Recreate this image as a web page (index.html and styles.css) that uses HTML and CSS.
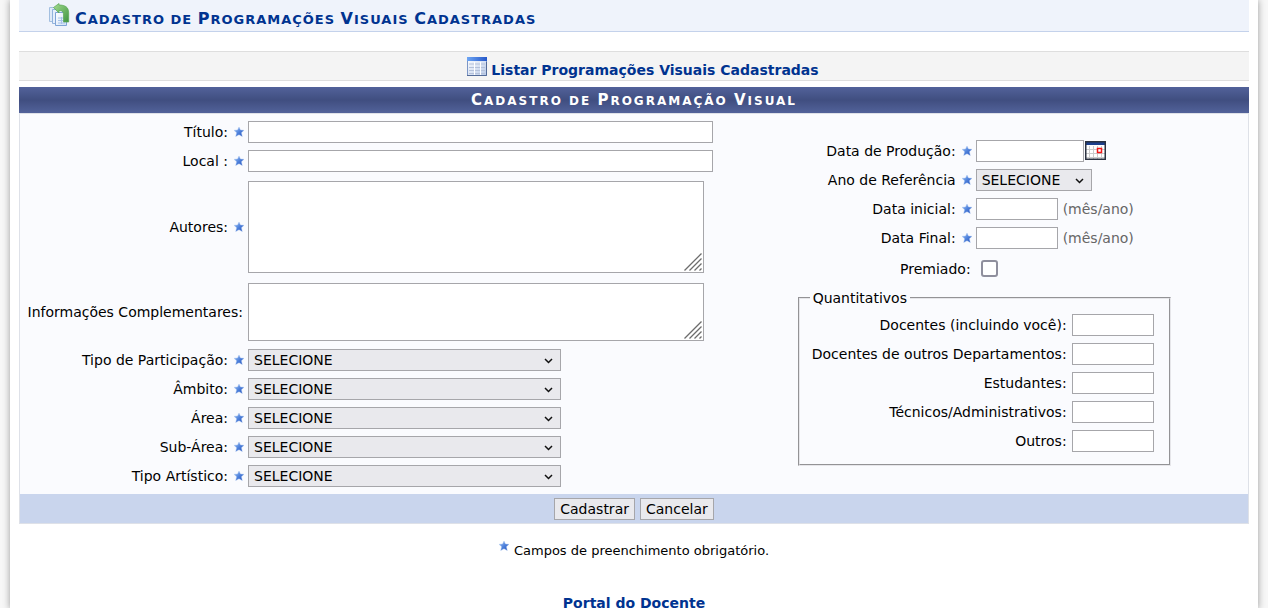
FILE: index.html
```html
<!DOCTYPE html>
<html lang="pt-BR">
<head>
<meta charset="utf-8">
<title>Cadastro de Programações Visuais Cadastradas</title>
<link rel="stylesheet" href="styles.css">
</head>
<body>
<svg class="sprites" aria-hidden="true">
  <defs>
    <linearGradient id="star-fill" x1="0" y1="0" x2="1" y2="1">
      <stop offset="0" stop-color="#a9cbf8"/><stop offset=".5" stop-color="#4f82dc"/><stop offset="1" stop-color="#2450b8"/>
    </linearGradient>
    <linearGradient id="sheet-fill" x1="0" y1="0" x2="1" y2="1">
      <stop offset="0" stop-color="#ffffff"/><stop offset="1" stop-color="#cfe0f6"/>
    </linearGradient>
    <linearGradient id="arrow-fill" x1="0" y1="0" x2="1" y2="1">
      <stop offset="0" stop-color="#a4dc90"/><stop offset="1" stop-color="#3f9440"/>
    </linearGradient>
    <linearGradient id="bar-fill" x1="0" y1="0" x2="1" y2="0">
      <stop offset="0" stop-color="#6ea6f4"/><stop offset="1" stop-color="#2557c8"/>
    </linearGradient>
    <linearGradient id="grid-fill" x1="0" y1="0" x2="1" y2="1">
      <stop offset="0" stop-color="#ffffff"/><stop offset="1" stop-color="#b7c9e8"/>
    </linearGradient>
  </defs>
  <symbol id="star" viewBox="0 0 10 10">
    <path d="M5 0 6.500 3 10 3.300 7.400 5.700 8.300 9.600 5 7.700 1.700 9.600 2.600 5.700 0 3.300 3.500 3Z" fill="url(#star-fill)" stroke="#a9c4f0" stroke-width=".4"/>
  </symbol>
  <symbol id="chevron" viewBox="0 0 9 6">
    <path d="M1 1 4.500 4.500 8 1" fill="none" stroke="#111" stroke-width="1.500"/>
  </symbol>
  <symbol id="grip" viewBox="0 0 18 18">
    <path d="M.5 17.500 17.500.5M5.500 17.500 17.500 5.500M10.500 17.500 17.500 10.500M15.500 17.500 17.500 15.500" fill="none" stroke="#6c6c6c" stroke-width="1.300"/>
  </symbol>
</svg>

<main class="page">
  <h1 class="page-title">
    <svg class="page-icon" viewBox="0 0 22 24" aria-hidden="true">
      <path d="M1.500 4.500h9v14h-9z" fill="#dfeaf8" stroke="#a3bfe0"/>
      <path d="M4.500 6.500h10v14h-10z" fill="#e6effb" stroke="#92b3dc"/>
      <path d="M7.500 9.500h11v13h-11z" fill="url(#sheet-fill)" stroke="#7fa4d6"/>
      <path d="M10 15h7M10 17.500h7M10 20h7M13.500 14v7" stroke="#a6c2e8" fill="none"/>
      <path d="M5.500 4.500 11 .5V2c6 0 9.700 2 9.700 8v9h-5.200v-7C15.500 8.500 14 7.500 11 7.500v2.500Z" fill="url(#arrow-fill)" stroke="#5aa653" stroke-width=".7"/>
    </svg>
    <span class="caps"><span class="word">Cadastro</span> de <span class="word">Programações</span> <span class="word">Visuais</span> <span class="word">Cadastradas</span></span>
  </h1>

  <nav class="toolbar">
    <svg class="list-icon" viewBox="0 0 20 19" aria-hidden="true">
      <rect x=".5" y=".5" width="19" height="18" fill="url(#grid-fill)" stroke="#7c96c6"/>
      <rect width="20" height="4" fill="url(#bar-fill)"/>
      <path d="M2 7h16M2 10.500h16M2 13.500h16M2 16.500h16" stroke="#b4c1da" fill="none"/>
      <path d="M7.500 5v13M13.500 5v13" stroke="#fff" fill="none"/>
      <path d="M0 18.500h19.500V5" stroke="#536b98" fill="none"/>
    </svg>
    <a href="#">Listar Programações Visuais Cadastradas</a>
  </nav>

  <form class="form">
    <h2 class="form-title"><span class="word">Cadastro</span> de <span class="word">Programação</span> <span class="word">Visual</span></h2>
    <div class="form-body">
      <div class="main-fields">
        <label for="titulo">Título:<svg class="star"><use href="#star"/></svg></label>
        <input class="text-wide" id="titulo" type="text">
        <label for="local">Local :<svg class="star"><use href="#star"/></svg></label>
        <input class="text-wide" id="local" type="text">
        <label for="autores">Autores:<svg class="star"><use href="#star"/></svg></label>
        <span class="area"><textarea class="area-tall" id="autores"></textarea><svg class="grip"><use href="#grip"/></svg></span>
        <label class="plain" for="info">Informações Complementares:</label>
        <span class="area"><textarea class="area-short" id="info"></textarea><svg class="grip"><use href="#grip"/></svg></span>
        <label for="tipo">Tipo de Participação:<svg class="star"><use href="#star"/></svg></label>
        <span class="select select-wide"><select id="tipo"><option>SELECIONE</option></select><svg class="chevron"><use href="#chevron"/></svg></span>
        <label for="ambito">Âmbito:<svg class="star"><use href="#star"/></svg></label>
        <span class="select select-wide"><select id="ambito"><option>SELECIONE</option></select><svg class="chevron"><use href="#chevron"/></svg></span>
        <label for="area">Área:<svg class="star"><use href="#star"/></svg></label>
        <span class="select select-wide"><select id="area"><option>SELECIONE</option></select><svg class="chevron"><use href="#chevron"/></svg></span>
        <label for="subarea">Sub-Área:<svg class="star"><use href="#star"/></svg></label>
        <span class="select select-wide"><select id="subarea"><option>SELECIONE</option></select><svg class="chevron"><use href="#chevron"/></svg></span>
        <label for="artistico">Tipo Artístico:<svg class="star"><use href="#star"/></svg></label>
        <span class="select select-wide"><select id="artistico"><option>SELECIONE</option></select><svg class="chevron"><use href="#chevron"/></svg></span>
      </div>

      <div class="side">
        <div class="side-fields">
          <label for="producao">Data de Produção:<svg class="star"><use href="#star"/></svg></label>
          <span class="field">
            <input class="text-date" id="producao" type="text">
            <button class="calendar" type="button" aria-label="Calendário">
              <svg viewBox="0 0 21 19" width="21" height="19" aria-hidden="true">
                <rect x="1" y="1" width="19" height="17" fill="#fff"/>
                <path d="M1 8.500h19M1 12.500h19M1 16.500h19M4.500 5v13M8.500 5v13M12.500 5v13M16.500 5v13" stroke="#cccccc" fill="none"/>
                <path d="M1 2.500h19" stroke="#1c3f8c" stroke-width="3"/>
                <rect x=".75" y=".75" width="19.500" height="17.500" fill="none" stroke="#2b3240" stroke-width="1.500"/>
                <path d="M12.500 7.500h4v4h-4z" fill="#fff" stroke="#f01818" stroke-width="1.500"/>
              </svg>
            </button>
          </span>
          <label for="ano">Ano de Referência<svg class="star"><use href="#star"/></svg></label>
          <span class="select select-year"><select id="ano"><option>SELECIONE</option></select><svg class="chevron"><use href="#chevron"/></svg></span>
          <label for="inicial">Data inicial:<svg class="star"><use href="#star"/></svg></label>
          <span class="field"><input class="text-small" id="inicial" type="text"><span class="hint">(mês/ano)</span></span>
          <label for="final">Data Final:<svg class="star"><use href="#star"/></svg></label>
          <span class="field"><input class="text-small" id="final" type="text"><span class="hint">(mês/ano)</span></span>
          <label class="plain" for="premiado">Premiado:</label>
          <span class="field check-field"><input class="check" id="premiado" type="checkbox"></span>
        </div>
        <fieldset class="counts">
          <legend>Quantitativos</legend>
          <div class="count-fields">
            <label class="plain" for="docentes">Docentes (incluindo você):</label><input class="text-small" id="docentes" type="text">
            <label class="plain" for="outrosdep">Docentes de outros Departamentos:</label><input class="text-small" id="outrosdep" type="text">
            <label class="plain" for="estudantes">Estudantes:</label><input class="text-small" id="estudantes" type="text">
            <label class="plain" for="tecnicos">Técnicos/Administrativos:</label><input class="text-small" id="tecnicos" type="text">
            <label class="plain" for="outros">Outros:</label><input class="text-small" id="outros" type="text">
          </div>
        </fieldset>
      </div>
    </div>
    <div class="actions">
      <button class="action" type="button">Cadastrar</button>
      <button class="action" type="button">Cancelar</button>
    </div>
  </form>

  <p class="note"><svg class="star"><use href="#star"/></svg>Campos de preenchimento obrigatório.</p>
  <p class="portal"><a href="#">Portal do Docente</a></p>
</main>
</body>
</html>
```
FILE: styles.css
```css
* { box-sizing: border-box; }

body {
  margin: 0;
  padding: 0 10px;
  background: #f7f7f7;
  font: 14px/20px Verdana, "DejaVu Sans", sans-serif;
  color: #000;
}

.sprites { position: absolute; width: 0; height: 0; }

.page {
  min-height: 100vh;
  padding: 0 9px;
  background: #fff;
  box-shadow: 0 0 7px #999;
}

.page-title {
  display: flex;
  align-items: center;
  gap: 5px;
  height: 32px;
  margin: 0 0 19px;
  padding: 8px 29px 0;
  background: #eff3fb;
  border-bottom: 1px solid #c4d2eb;
  color: #003390;
  font-size: 13px;
  letter-spacing: 1px;
  text-transform: uppercase;
}

.page-title .word::first-letter { font-size: 16px; }

.word { display: inline-block; }

.page-icon { width: 22px; height: 24px; margin-bottom: 10px; }

.toolbar {
  display: flex;
  align-items: center;
  justify-content: center;
  gap: 4px;
  height: 30px;
  margin-bottom: 6px;
  padding-left: 18px;
  background: #f4f4f4;
  border: solid #dedede;
  border-width: 1px 0;
}

.list-icon { width: 20px; height: 19px; }

.toolbar a { padding-top: 8px; }

a { color: #003390; font-weight: bold; text-decoration: none; }

.form-title {
  height: 26px;
  margin: 0;
  background: linear-gradient(#52629a, #404e80 50%, #52629a);
  color: #fff;
  font-size: 12px;
  line-height: 26px;
  letter-spacing: 2px;
  text-align: center;
  text-transform: uppercase;
}

.form-title .word::first-letter { font-size: 15px; }

.form-body {
  display: grid;
  grid-template-columns: 63fr 37fr;
  align-items: center;
  padding: 7px 0;
  background: #fafbfe;
  border: solid #dee1e8;
  border-width: 1px 1px 0;
}

.main-fields {
  display: grid;
  grid-template-columns: 228px auto;
  justify-content: start;
  align-items: center;
  row-gap: 7px;
}

label {
  display: flex;
  align-items: center;
  justify-content: flex-end;
  gap: 6px;
  padding-right: 4px;
  white-space: nowrap;
}

label.plain { padding-right: 5px; }

.star { width: 10px; height: 10px; flex: none; }

input[type="text"], textarea, select, .action {
  height: 22px;
  margin: 0;
  border: 1px solid #a6a6aa;
  border-radius: 0;
  background: #fff;
  color: #000;
  font: inherit;
}

.text-wide { width: 465px; }
.text-date { width: 108px; }
.text-small { width: 82px; }

.area { position: relative; display: flex; justify-self: start; margin: 2px 0 1px; }
.area textarea { width: 456px; resize: none; }
textarea.area-tall { height: 92px; }
textarea.area-short { height: 58px; }

.grip { position: absolute; right: 2px; bottom: 2px; width: 18px; height: 18px; pointer-events: none; }

.select { position: relative; display: flex; justify-self: start; }
.select-wide { width: 313px; }
.select-year { width: 116px; }
.select select { width: 100%; padding: 0 5px; appearance: none; background: #e9e9ed; line-height: 20px; }

.chevron { position: absolute; right: 8px; top: 9px; width: 9px; height: 6px; pointer-events: none; }

.side { padding: 0 0 3px 4px; }

.side-fields {
  display: grid;
  grid-template-columns: 178px auto;
  justify-content: start;
  align-items: center;
  row-gap: 7px;
}

.field { display: flex; align-items: center; }

.calendar { display: flex; margin: 0 0 0 1px; padding: 0; border: 0; background: none; }

.hint { padding-left: 5px; color: #666; }

.check-field { height: 26px; padding-left: 5px; }

.check {
  width: 17px;
  height: 17px;
  margin: 0;
  appearance: none;
  background: #fff;
  border: 2px solid #8f8f9d;
  border-radius: 3px;
}

.counts {
  width: 373px;
  margin: 8px 0 0;
  padding: 8px 15px 12px 10px;
  border: 2px groove #e6e6ea;
}

.counts legend { padding: 0 3px; line-height: 16px; }

.count-fields {
  display: grid;
  grid-template-columns: auto 82px;
  justify-content: end;
  align-items: center;
  row-gap: 7px;
}

.actions {
  display: flex;
  justify-content: center;
  gap: 5px;
  padding: 4px 0 3px;
  background: #c9d5ed;
  border: 1px solid #dee1e8;
  border-top: 0;
}

.action { padding: 0 5px; background: #e9e9ed; line-height: 20px; }

.note {
  display: flex;
  justify-content: center;
  gap: 5px;
  margin: 17px 0 32px;
  font-size: 13px;
}

.portal { height: 16px; margin: 0; text-align: center; }
.portal a { line-height: 16px; }
```
